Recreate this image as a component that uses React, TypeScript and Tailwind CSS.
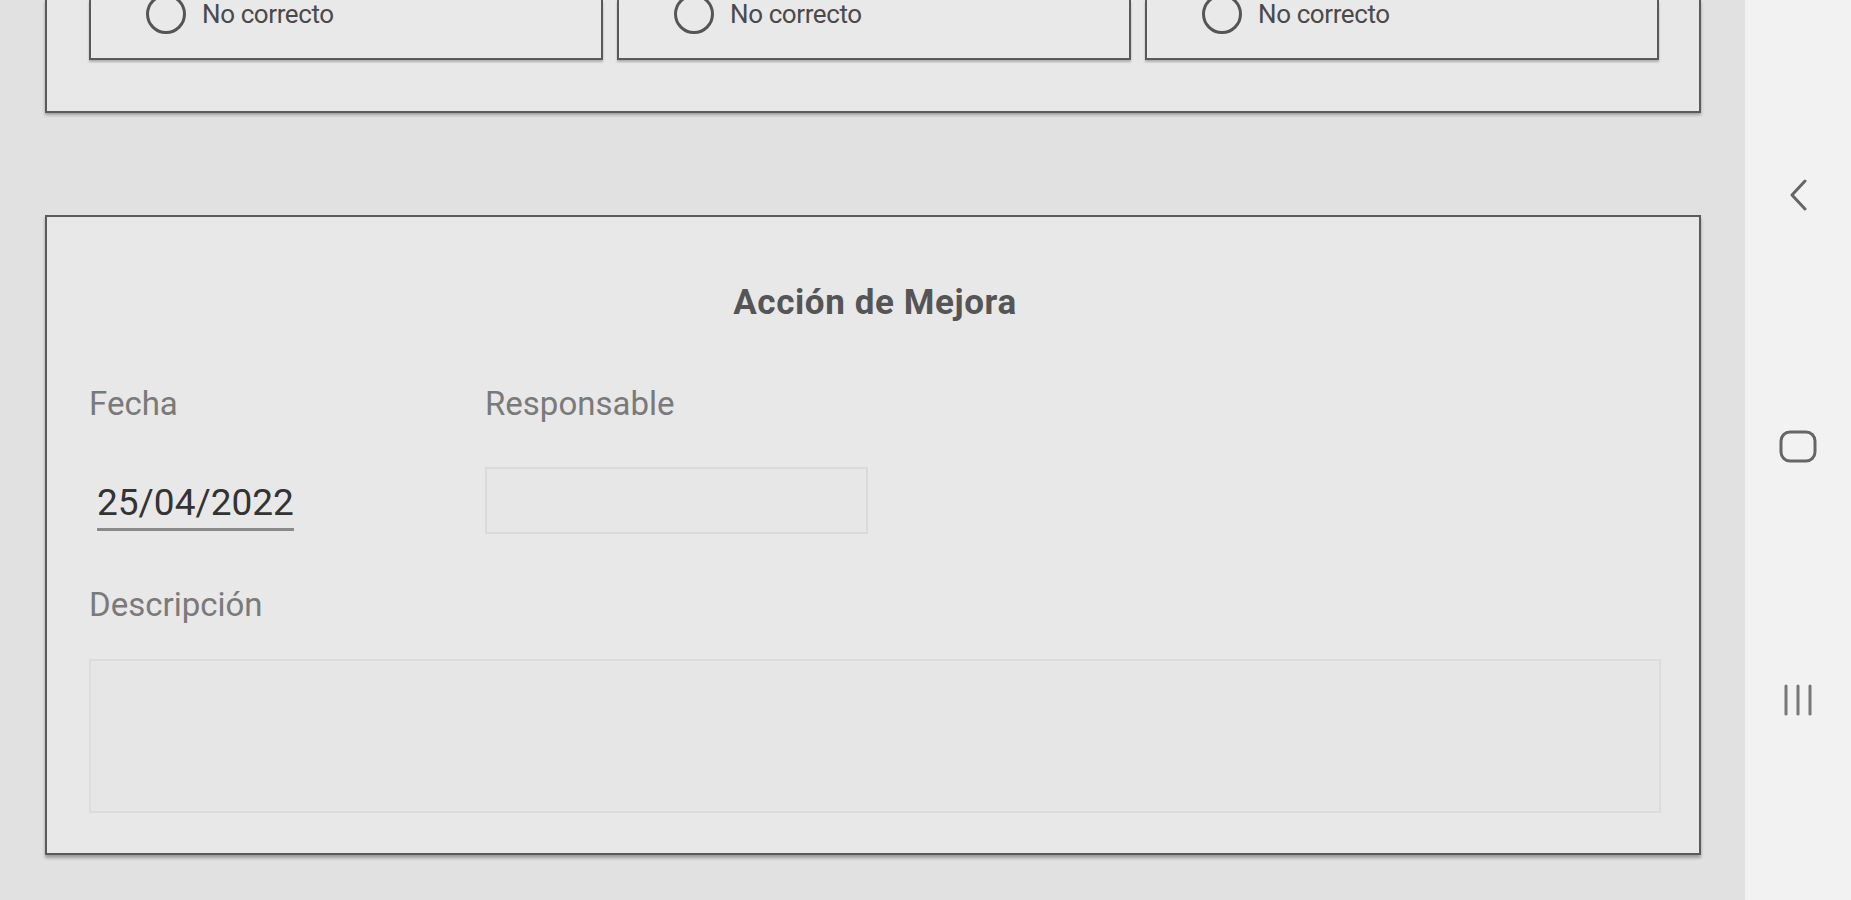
import React from 'react';

const FONT = "font-['Roboto','Liberation_Sans',sans-serif]";

const RadioOption = ({ label }: { label: string }) => (
  <div className="flex-1 h-[60px] border-x-2 border-b-2 border-[#5a5a5a] bg-[#e9e9e9] shadow-[0_2px_2px_rgba(0,0,0,0.25)]">
    <div className="flex items-center h-[40px] -mt-[6px] pl-[55px]">
      <div className="w-[40px] h-[40px] rounded-full border-[3px] border-[#555] shrink-0" />
      <span className="ml-[16px] text-[26px] leading-none text-[#4a4a4a] tracking-[-0.4px]">{label}</span>
    </div>
  </div>
);

export default function App() {
  return (
    <div className={`${FONT} flex w-full h-[900px] overflow-hidden bg-[#e1e1e1]`}>
      {/* Main scroll area */}
      <div className="flex-1 flex flex-col pl-[45px] pr-[44px]">
        {/* Previous section, mostly scrolled off */}
        <div className="h-[113px] border-x-2 border-b-2 border-[#5a5a5a] bg-[#e8e8e8] pl-[42px] pr-[40px] shadow-[0_2px_3px_rgba(0,0,0,0.3)]">
          <div className="flex gap-[14px]">
            <RadioOption label="No correcto" />
            <RadioOption label="No correcto" />
            <RadioOption label="No correcto" />
          </div>
        </div>

        {/* Acción de Mejora */}
        <div className="mt-[102px] border-2 border-[#5a5a5a] bg-[#e8e8e8] pl-[42px] pr-[38px] pt-[69px] pb-[40px] shadow-[0_3px_3px_rgba(0,0,0,0.3)]">
          <h2 className="text-center text-[35px] leading-[34px] font-bold tracking-[0.6px] text-[#555]">
            Acción de Mejora
          </h2>

          <div className="flex mt-[68px] text-[33px] leading-[32px] text-[#7a7a7a]">
            <div className="w-[396px]">Fecha</div>
            <div>Responsable</div>
          </div>

          <div className="flex mt-[47px] items-start">
            <div className="w-[396px] pl-[8px]">
              <div className="inline-block mt-[17px] pb-[6px] border-b-[3px] border-[#8a8a8a] text-[37px] leading-[38px] text-[#333]">
                25/04/2022
              </div>
            </div>
            <div className="w-[383px] h-[67px] border-2 border-[#dadada] bg-[#e7e7e7]" />
          </div>

          <div className="mt-[55px] text-[33px] leading-[32px] text-[#7a7a7a]">Descripción</div>

          <div className="mt-[38px] h-[154px] border-2 border-[#dcdcdc] bg-[#e6e6e6]" />
        </div>
      </div>

      {/* Android navigation bar */}
      <div className="w-[106px] bg-[#f2f2f2] flex flex-col items-center">
        <svg className="mt-[179px]" width="22" height="32" viewBox="0 0 22 32" fill="none">
          <path d="M18 2 L5 16 L18 30" stroke="#666" strokeWidth="3" strokeLinecap="round" strokeLinejoin="round" />
        </svg>
        <svg className="mt-[219px]" width="38" height="33" viewBox="0 0 38 33" fill="none">
          <rect x="2" y="2" width="34" height="29" rx="9" stroke="#666" strokeWidth="3" />
        </svg>
        <svg className="mt-[221px]" width="32" height="32" viewBox="0 0 32 32" fill="none">
          <path d="M4 2 V30 M16 2 V30 M28 2 V30" stroke="#777" strokeWidth="3" strokeLinecap="round" />
        </svg>
      </div>
    </div>
  );
}
